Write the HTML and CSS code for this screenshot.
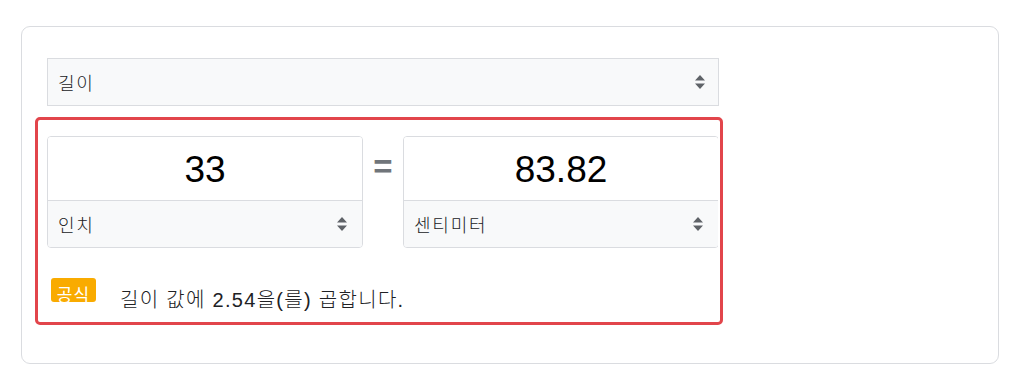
FILE: index.html
```html
<!DOCTYPE html>
<html lang="ko">
<head>
<meta charset="utf-8">
<link rel="stylesheet" href="styles.css">
</head>
<body>
<div class="card">
  <div class="converter">
    <div class="category select">
      <span>길이</span>
      <svg class="updown" width="12" height="16" viewBox="0 0 12 16"><path d="M6 1 L11 6.5 H1 Z M6 15 L11 9.5 H1 Z" fill="#5f6368"/></svg>
    </div>
    <div class="annotated">
      <div class="row">
        <div class="unit">
          <div class="value">33</div>
          <div class="select unit-select">
            <span>인치</span>
            <svg class="updown" width="12" height="16" viewBox="0 0 12 16"><path d="M6 1 L11 6.5 H1 Z M6 15 L11 9.5 H1 Z" fill="#5f6368"/></svg>
          </div>
        </div>
        <div class="eq">=</div>
        <div class="unit">
          <div class="value">83.82</div>
          <div class="select unit-select">
            <span>센티미터</span>
            <svg class="updown" width="12" height="16" viewBox="0 0 12 16"><path d="M6 1 L11 6.5 H1 Z M6 15 L11 9.5 H1 Z" fill="#5f6368"/></svg>
          </div>
        </div>
      </div>
      <div class="formula">
        <span class="badge">공식</span>
        <span class="formula-text">길이 값에 2.54을(를) 곱합니다.</span>
      </div>
      <div class="highlight"></div>
    </div>
  </div>
</div>
</body>
</html>
```

FILE: styles.css
```css
html, body {
  margin: 0;
  padding: 0;
  background: #ffffff;
}
body {
  font-family: "Liberation Sans", Arial, "Noto Sans CJK KR", sans-serif;
  color: #202124;
}
.card {
  box-sizing: border-box;
  margin: 26px 0 0 21px;
  width: 978px;
  height: 338px;
  border: 1px solid #dadce0;
  border-radius: 9px;
  padding: 31px 0 0 25px;
}
.converter {
  width: 672px;
}
.select {
  box-sizing: border-box;
  display: flex;
  align-items: center;
  justify-content: space-between;
  background: #f8f9fa;
  color: #202124;
  padding: 0 12px 0 10px;
}
.select span {
  font-family: "Noto Sans CJK KR", sans-serif;
  font-size: 18px;
  font-weight: 300;
  letter-spacing: 1.8px;
}
.category {
  height: 48px;
  border: 1px solid #dadce0;
}
.updown {
  display: block;
}
.annotated {
  position: relative;
  margin-top: 30px;
}
.row {
  display: flex;
  align-items: flex-start;
  width: 671px;
  overflow: hidden;
}
.unit {
  box-sizing: border-box;
  flex: 0 0 316px;
  height: 112px;
  border: 1px solid #dadce0;
  border-radius: 4px;
  overflow: hidden;
}
.value {
  box-sizing: border-box;
  height: 64px;
  border-bottom: 1px solid #dadce0;
  display: flex;
  align-items: center;
  justify-content: center;
  font-size: 37px;
  color: #000000;
  background: #fff;
  padding-top: 2px;
}
.unit-select {
  height: 46px;
  padding: 0 14px 0 10px;
}
.eq {
  flex: 0 0 40px;
  text-align: center;
  font-size: 33px;
  font-weight: bold;
  color: #70757a;
  line-height: 62px;
}
.formula {
  display: flex;
  align-items: flex-start;
  margin-top: 30px;
  padding-left: 4px;
  height: 25px;
}
.badge {
  box-sizing: border-box;
  width: 45px;
  height: 24px;
  background: #f9ab00;
  border-radius: 3px;
  color: #ffffff;
  font-family: "Noto Sans CJK KR", sans-serif;
  font-size: 17px;
  line-height: 31px;
  letter-spacing: 1px;
  text-align: center;
}
.formula-text {
  margin-left: 24px;
  margin-top: 6px;
  font-family: "Liberation Sans", "Noto Sans CJK KR", sans-serif;
  font-size: 20px;
  font-weight: 300;
  letter-spacing: 1.3px;
  color: #202124;
}
.highlight {
  position: absolute;
  left: -12px;
  top: -19px;
  width: 688px;
  height: 208px;
  box-sizing: border-box;
  border: 3px solid #e2454b;
  border-radius: 5px;
  pointer-events: none;
}
```
